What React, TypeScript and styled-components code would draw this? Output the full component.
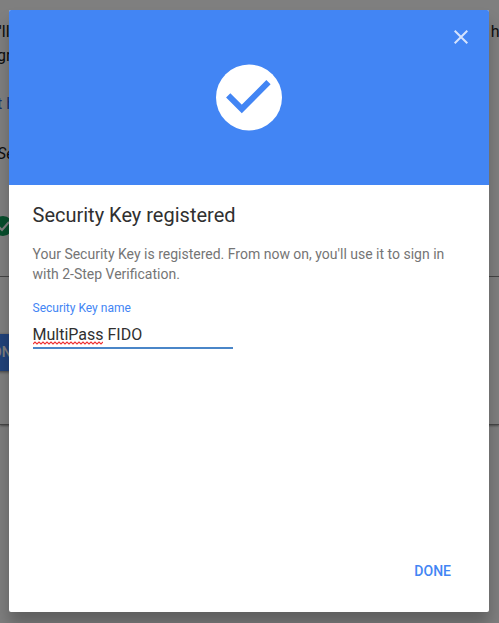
import React from "react";
import styled, { createGlobalStyle } from "styled-components";

const GlobalStyle = createGlobalStyle`
  * { box-sizing: border-box; }
  body {
    margin: 0;
    overflow: hidden;
    font-family: Roboto, "Liberation Sans", sans-serif;
    background: #fff;
  }
`;

const Screen = styled.div`
  position: relative;
  width: 499px;
  height: 623px;
  overflow: hidden;
`;

const Page = styled.div`
  height: 100%;
  overflow: hidden;
  background: #fdfdfd;
`;

const Section = styled.section<{ $height: number }>`
  height: ${(p) => p.$height}px;
  overflow: hidden;
  background: #fff;
  border-bottom: 1px solid #8c8c8c;
  box-shadow: 0 1px 2px rgba(0, 0, 0, 0.4);
`;

const Line = styled.p<{ $top?: number; $shift?: number; $link?: boolean; $italic?: boolean }>`
  display: flex;
  justify-content: space-between;
  margin: ${(p) => p.$top ?? 0}px -9px 0 ${(p) => p.$shift ?? 0}px;
  height: 24px;
  font-size: 16px;
  line-height: 24px;
  white-space: nowrap;
  color: ${(p) => (p.$link ? "#3367d6" : "#212121")};
  font-style: ${(p) => (p.$italic ? "italic" : "normal")};
`;

const StatusIcon = styled.svg`
  display: block;
  width: 20px;
  height: 20px;
  margin: 50px 0 0 -7px;
`;

const PageButton = styled.div`
  width: 60px;
  height: 37px;
  margin: 57px 0 0 -8px;
  font-size: 14px;
  font-weight: 500;
  line-height: 36px;
  color: #fff;
  background: #4285f4;
  box-shadow: 0 1px 3px rgba(0, 0, 0, 0.5);
`;

const Scrim = styled.div`
  position: absolute;
  inset: 0;
  padding: 10px 10px 11px 9px;
  background: rgba(0, 0, 0, 0.5);
`;

const Dialog = styled.div`
  display: flex;
  flex-direction: column;
  width: 480px;
  height: 602px;
  overflow: hidden;
  border-radius: 2px;
  background: #fff;
  box-shadow: 0 12px 15px rgba(0, 0, 0, 0.24);
`;

const Banner = styled.header`
  position: relative;
  display: flex;
  justify-content: center;
  height: 175px;
  padding: 54px 1px 0 0;
  background: #4285f4;
`;

const CheckBadge = styled.svg`
  width: 66px;
  height: 67px;
`;

const CloseButton = styled.button`
  position: absolute;
  top: 20px;
  right: 21px;
  width: 14px;
  height: 14px;
  padding: 0;
  border: 0;
  background: none;

  svg { display: block; }
`;

const Content = styled.div`
  flex: 1;
  padding: 18px 24px 0 23.5px;
`;

const Title = styled.h1`
  margin: 0;
  font-size: 20px;
  font-weight: 400;
  line-height: 24px;
  color: #303030;
`;

const Message = styled.p`
  width: 430px;
  margin: 17px 0 0;
  font-size: 14px;
  line-height: 20px;
  color: #757575;
`;

const Label = styled.div`
  margin-top: 16px;
  font-size: 12px;
  line-height: 16px;
  color: #4285f4;
`;

const Field = styled.div`
  width: 200px;
  height: 33px;
  padding-top: 8px;
  border-bottom: 2px solid #4a86c8;
  font-size: 16px;
  line-height: 22px;
  color: #303030;
`;

const Misspelled = styled.span`
  position: relative;
`;

const Squiggle = styled.svg`
  position: absolute;
  left: 0;
  top: 16px;
  width: 70px;
  height: 4px;
`;

const Actions = styled.footer`
  display: flex;
  justify-content: flex-end;
  padding: 0 38px 32px 0;
`;

const DoneButton = styled.button`
  padding: 0;
  border: 0;
  background: none;
  font-family: inherit;
  font-size: 14px;
  font-weight: 500;
  line-height: 18px;
  color: #4285f4;
`;

const wave = "M0 3" + Array.from({ length: 17 }, () => "l2 -2l2 2").join("") + "l2 -2";

export default function App() {
  return (
    <>
      <GlobalStyle />
      <Screen>
        <Page aria-hidden="true">
          <Section $height={277}>
            <Line $top={20} $shift={-1}><span>'ll</span><span>he</span></Line>
            <Line $shift={-3}>gr</Line>
            <Line $top={24} $shift={-3} $link>t h</Line>
            <Line $top={26} $shift={-3} $italic>Se</Line>
            <StatusIcon viewBox="0 0 20 20">
              <circle cx="10" cy="10" r="10" fill="#0f9d58" />
              <path d="M5 10l4 4 7-8" fill="none" stroke="#fff" strokeWidth="2" />
            </StatusIcon>
          </Section>
          <Section $height={148}>
            <PageButton>ON</PageButton>
          </Section>
        </Page>
        <Scrim>
          <Dialog role="dialog" aria-labelledby="dialog-title">
            <Banner>
              <CheckBadge viewBox="0 0 66 67">
                <circle cx="33" cy="33.5" r="33" fill="#fff" />
                <path d="M12.2 31.3L25.8 44.9L52.5 18.2" fill="none" stroke="#4285f4" strokeWidth="6" />
              </CheckBadge>
              <CloseButton aria-label="Close">
                <svg width="14" height="14" viewBox="0 0 14 14">
                  <path d="M.7.7l12.6 12.6M13.3.7L.7 13.3" stroke="#d5e3fd" strokeWidth="2" />
                </svg>
              </CloseButton>
            </Banner>
            <Content>
              <Title id="dialog-title">Security Key registered</Title>
              <Message>
                Your Security Key is registered. From now on, you'll use it to sign in with 2-Step Verification.
              </Message>
              <Label>Security Key name</Label>
              <Field>
                <Misspelled>
                  MultiPass
                  <Squiggle viewBox="0 0 70 4">
                    <path d={wave} fill="none" stroke="#e33" strokeWidth="1.1" />
                  </Squiggle>
                </Misspelled>{" "}
                FIDO
              </Field>
            </Content>
            <Actions>
              <DoneButton>DONE</DoneButton>
            </Actions>
          </Dialog>
        </Scrim>
      </Screen>
    </>
  );
}
